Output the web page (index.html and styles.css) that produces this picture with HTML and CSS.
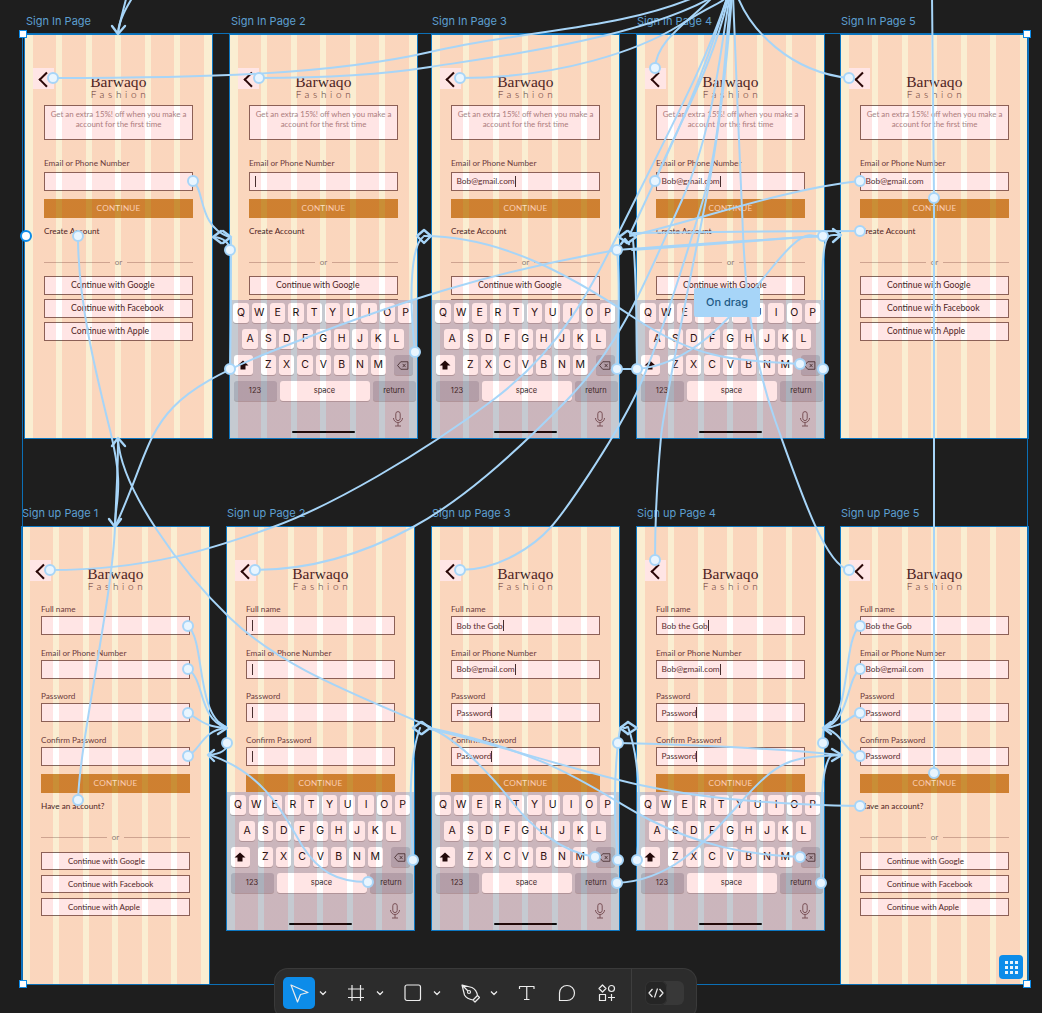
FILE: index.html
```html
<!DOCTYPE html>
<html lang="en">
<head>
<meta charset="utf-8">
<title>Barwaqo Fashion prototype</title>
<link rel="stylesheet" href="styles.css">
</head>
<body>
<svg class="defs" width="0" height="0" aria-hidden="true">
  <symbol id="i-shift" viewBox="0 0 12 10"><path d="M6 .5 11.500 5.500H8.500V9.500H3.500V5.500H.5Z" fill="#0a0a0a"/></symbol>
  <symbol id="i-del" viewBox="0 0 16 12"><path d="M5 1H14.500V11H5L.8 6Z" fill="none" stroke="#222" stroke-width="1"/><path d="M7.500 3.800 11.500 8.200M11.500 3.800 7.500 8.200" stroke="#222" stroke-width="1"/></symbol>
  <symbol id="i-mic" viewBox="0 0 12 16"><rect x="3.800" y=".6" width="4.400" height="9" rx="2.200" fill="none" stroke="#6b5a60" stroke-width="1"/><path d="M1.500 7A4.500 4.500 0 0 0 10.500 7M6 11.500V15M3 15H9" fill="none" stroke="#6b5a60" stroke-width="1"/></symbol>
</svg>
<main class="canvas">

  <section class="board a1">
    <h2 class="cap">Sign In Page</h2>
    <div class="frame">
      <header class="head"><span class="back"></span><div class="logo"><b>Barwaqo</b><i>Fashion</i></div></header>
      <div class="form">
        <p class="promo">Get an extra 15%! off when you make a account for the first time</p>
        <label class="lbl">Email or Phone Number</label>
        <div class="inp"></div>
        <div class="btn">CONTINUE</div>
        <p class="link">Create Account</p>
        <div class="or"><span>or</span></div>
        <div class="soc">Continue with Google</div>
        <div class="soc">Continue with Facebook</div>
        <div class="soc">Continue with Apple</div>
      </div>
    </div>
  </section>

  <section class="board a2">
    <h2 class="cap">Sign In Page 2</h2>
    <div class="frame">
      <header class="head"><span class="back"></span><div class="logo"><b>Barwaqo</b><i>Fashion</i></div></header>
      <div class="form">
        <p class="promo">Get an extra 15%! off when you make a account for the first time</p>
        <label class="lbl">Email or Phone Number</label>
        <div class="inp"><span class="caret"></span></div>
        <div class="btn">CONTINUE</div>
        <p class="link">Create Account</p>
        <div class="or"><span>or</span></div>
        <div class="soc">Continue with Google</div>
        <div class="soc"></div>
      </div>
      <div class="kb">
        <div class="kr"><span class="k">Q</span><span class="k">W</span><span class="k">E</span><span class="k">R</span><span class="k">T</span><span class="k">Y</span><span class="k">U</span><span class="k">I</span><span class="k">O</span><span class="k">P</span></div>
        <div class="kr"><span class="k">A</span><span class="k">S</span><span class="k">D</span><span class="k">F</span><span class="k">G</span><span class="k">H</span><span class="k">J</span><span class="k">K</span><span class="k">L</span></div>
        <div class="kr sb"><span class="k w"><svg class="ks"><use href="#i-shift"/></svg></span><div class="kg"><span class="k">Z</span><span class="k">X</span><span class="k">C</span><span class="k">V</span><span class="k">B</span><span class="k">N</span><span class="k">M</span></div><span class="k w dk"><svg class="kd"><use href="#i-del"/></svg></span></div>
        <div class="kr sb"><span class="k m dk">123</span><span class="k sp">space</span><span class="k m dk">return</span></div>
        <svg class="mic"><use href="#i-mic"/></svg><span class="home"></span>
      </div>
    </div>
  </section>

  <section class="board a3">
    <h2 class="cap">Sign In Page 3</h2>
    <div class="frame">
      <header class="head"><span class="back"></span><div class="logo"><b>Barwaqo</b><i>Fashion</i></div></header>
      <div class="form">
        <p class="promo">Get an extra 15%! off when you make a account for the first time</p>
        <label class="lbl">Email or Phone Number</label>
        <div class="inp">Bob@gmail.com<span class="caret"></span></div>
        <div class="btn">CONTINUE</div>
        <p class="link">Create Account</p>
        <div class="or"><span>or</span></div>
        <div class="soc">Continue with Google</div>
        <div class="soc"></div>
      </div>
      <div class="kb">
        <div class="kr"><span class="k">Q</span><span class="k">W</span><span class="k">E</span><span class="k">R</span><span class="k">T</span><span class="k">Y</span><span class="k">U</span><span class="k">I</span><span class="k">O</span><span class="k">P</span></div>
        <div class="kr"><span class="k">A</span><span class="k">S</span><span class="k">D</span><span class="k">F</span><span class="k">G</span><span class="k">H</span><span class="k">J</span><span class="k">K</span><span class="k">L</span></div>
        <div class="kr sb"><span class="k w"><svg class="ks"><use href="#i-shift"/></svg></span><div class="kg"><span class="k">Z</span><span class="k">X</span><span class="k">C</span><span class="k">V</span><span class="k">B</span><span class="k">N</span><span class="k">M</span></div><span class="k w dk"><svg class="kd"><use href="#i-del"/></svg></span></div>
        <div class="kr sb"><span class="k m dk">123</span><span class="k sp">space</span><span class="k m dk">return</span></div>
        <svg class="mic"><use href="#i-mic"/></svg><span class="home"></span>
      </div>
    </div>
  </section>

  <section class="board a4">
    <h2 class="cap">Sign In Page 4</h2>
    <div class="frame">
      <header class="head"><span class="back"></span><div class="logo"><b>Barwaqo</b><i>Fashion</i></div></header>
      <div class="form">
        <p class="promo">Get an extra 15%! off when you make a account for the first time</p>
        <label class="lbl">Email or Phone Number</label>
        <div class="inp">Bob@gmail.com<span class="caret"></span></div>
        <div class="btn">CONTINUE</div>
        <p class="link">Create Account</p>
        <div class="or"><span>or</span></div>
        <div class="soc">Continue with Google</div>
        <div class="soc"></div>
      </div>
      <div class="kb">
        <div class="kr"><span class="k">Q</span><span class="k">W</span><span class="k">E</span><span class="k">R</span><span class="k">T</span><span class="k">Y</span><span class="k">U</span><span class="k">I</span><span class="k">O</span><span class="k">P</span></div>
        <div class="kr"><span class="k">A</span><span class="k">S</span><span class="k">D</span><span class="k">F</span><span class="k">G</span><span class="k">H</span><span class="k">J</span><span class="k">K</span><span class="k">L</span></div>
        <div class="kr sb"><span class="k w"><svg class="ks"><use href="#i-shift"/></svg></span><div class="kg"><span class="k">Z</span><span class="k">X</span><span class="k">C</span><span class="k">V</span><span class="k">B</span><span class="k">N</span><span class="k">M</span></div><span class="k w dk"><svg class="kd"><use href="#i-del"/></svg></span></div>
        <div class="kr sb"><span class="k m dk">123</span><span class="k sp">space</span><span class="k m dk">return</span></div>
        <svg class="mic"><use href="#i-mic"/></svg><span class="home"></span>
      </div>
    </div>
  </section>

  <section class="board a5">
    <h2 class="cap">Sign In Page 5</h2>
    <div class="frame">
      <header class="head"><span class="back"></span><div class="logo"><b>Barwaqo</b><i>Fashion</i></div></header>
      <div class="form">
        <p class="promo">Get an extra 15%! off when you make a account for the first time</p>
        <label class="lbl">Email or Phone Number</label>
        <div class="inp">Bob@gmail.com</div>
        <div class="btn">CONTINUE</div>
        <p class="link">Create Account</p>
        <div class="or"><span>or</span></div>
        <div class="soc">Continue with Google</div>
        <div class="soc">Continue with Facebook</div>
        <div class="soc">Continue with Apple</div>
      </div>
    </div>
  </section>

  <section class="board b1">
    <h2 class="cap">Sign up Page 1</h2>
    <div class="frame tall up">
      <header class="head"><span class="back"></span><div class="logo"><b>Barwaqo</b><i>Fashion</i></div></header>
      <div class="form">
        <div class="fields">
          <div><label class="lbl">Full name</label><div class="inp"></div></div>
          <div><label class="lbl">Email or Phone Number</label><div class="inp"></div></div>
          <div><label class="lbl">Password</label><div class="inp"></div></div>
          <div><label class="lbl">Confirm Password</label><div class="inp"></div></div>
        </div>
        <div class="btn">CONTINUE</div>
        <p class="link">Have an account?</p>
        <div class="or"><span>or</span></div>
        <div class="soc">Continue with Google</div>
        <div class="soc">Continue with Facebook</div>
        <div class="soc">Continue with Apple</div>
      </div>
    </div>
  </section>

  <section class="board b2">
    <h2 class="cap">Sign up Page 2</h2>
    <div class="frame up">
      <header class="head"><span class="back"></span><div class="logo"><b>Barwaqo</b><i>Fashion</i></div></header>
      <div class="form">
        <div class="fields">
          <div><label class="lbl">Full name</label><div class="inp"><span class="caret"></span></div></div>
          <div><label class="lbl">Email or Phone Number</label><div class="inp"><span class="caret"></span></div></div>
          <div><label class="lbl">Password</label><div class="inp"><span class="caret"></span></div></div>
          <div><label class="lbl">Confirm Password</label><div class="inp"><span class="caret"></span></div></div>
        </div>
        <div class="btn">CONTINUE</div>
      </div>
      <div class="kb">
        <div class="kr"><span class="k">Q</span><span class="k">W</span><span class="k">E</span><span class="k">R</span><span class="k">T</span><span class="k">Y</span><span class="k">U</span><span class="k">I</span><span class="k">O</span><span class="k">P</span></div>
        <div class="kr"><span class="k">A</span><span class="k">S</span><span class="k">D</span><span class="k">F</span><span class="k">G</span><span class="k">H</span><span class="k">J</span><span class="k">K</span><span class="k">L</span></div>
        <div class="kr sb"><span class="k w"><svg class="ks"><use href="#i-shift"/></svg></span><div class="kg"><span class="k">Z</span><span class="k">X</span><span class="k">C</span><span class="k">V</span><span class="k">B</span><span class="k">N</span><span class="k">M</span></div><span class="k w dk"><svg class="kd"><use href="#i-del"/></svg></span></div>
        <div class="kr sb"><span class="k m dk">123</span><span class="k sp">space</span><span class="k m dk">return</span></div>
        <svg class="mic"><use href="#i-mic"/></svg><span class="home"></span>
      </div>
    </div>
  </section>

  <section class="board b3">
    <h2 class="cap">Sign up Page 3</h2>
    <div class="frame up">
      <header class="head"><span class="back"></span><div class="logo"><b>Barwaqo</b><i>Fashion</i></div></header>
      <div class="form">
        <div class="fields">
          <div><label class="lbl">Full name</label><div class="inp">Bob the Gob<span class="caret"></span></div></div>
          <div><label class="lbl">Email or Phone Number</label><div class="inp">Bob@gmail.com<span class="caret"></span></div></div>
          <div><label class="lbl">Password</label><div class="inp">Password<span class="caret"></span></div></div>
          <div><label class="lbl">Confirm Password</label><div class="inp">Password<span class="caret"></span></div></div>
        </div>
        <div class="btn">CONTINUE</div>
      </div>
      <div class="kb">
        <div class="kr"><span class="k">Q</span><span class="k">W</span><span class="k">E</span><span class="k">R</span><span class="k">T</span><span class="k">Y</span><span class="k">U</span><span class="k">I</span><span class="k">O</span><span class="k">P</span></div>
        <div class="kr"><span class="k">A</span><span class="k">S</span><span class="k">D</span><span class="k">F</span><span class="k">G</span><span class="k">H</span><span class="k">J</span><span class="k">K</span><span class="k">L</span></div>
        <div class="kr sb"><span class="k w"><svg class="ks"><use href="#i-shift"/></svg></span><div class="kg"><span class="k">Z</span><span class="k">X</span><span class="k">C</span><span class="k">V</span><span class="k">B</span><span class="k">N</span><span class="k">M</span></div><span class="k w dk"><svg class="kd"><use href="#i-del"/></svg></span></div>
        <div class="kr sb"><span class="k m dk">123</span><span class="k sp">space</span><span class="k m dk">return</span></div>
        <svg class="mic"><use href="#i-mic"/></svg><span class="home"></span>
      </div>
    </div>
  </section>

  <section class="board b4">
    <h2 class="cap">Sign up Page 4</h2>
    <div class="frame up">
      <header class="head"><span class="back"></span><div class="logo"><b>Barwaqo</b><i>Fashion</i></div></header>
      <div class="form">
        <div class="fields">
          <div><label class="lbl">Full name</label><div class="inp">Bob the Gob<span class="caret"></span></div></div>
          <div><label class="lbl">Email or Phone Number</label><div class="inp">Bob@gmail.com<span class="caret"></span></div></div>
          <div><label class="lbl">Password</label><div class="inp">Password<span class="caret"></span></div></div>
          <div><label class="lbl">Confirm Password</label><div class="inp">Password<span class="caret"></span></div></div>
        </div>
        <div class="btn">CONTINUE</div>
      </div>
      <div class="kb">
        <div class="kr"><span class="k">Q</span><span class="k">W</span><span class="k">E</span><span class="k">R</span><span class="k">T</span><span class="k">Y</span><span class="k">U</span><span class="k">I</span><span class="k">O</span><span class="k">P</span></div>
        <div class="kr"><span class="k">A</span><span class="k">S</span><span class="k">D</span><span class="k">F</span><span class="k">G</span><span class="k">H</span><span class="k">J</span><span class="k">K</span><span class="k">L</span></div>
        <div class="kr sb"><span class="k w"><svg class="ks"><use href="#i-shift"/></svg></span><div class="kg"><span class="k">Z</span><span class="k">X</span><span class="k">C</span><span class="k">V</span><span class="k">B</span><span class="k">N</span><span class="k">M</span></div><span class="k w dk"><svg class="kd"><use href="#i-del"/></svg></span></div>
        <div class="kr sb"><span class="k m dk">123</span><span class="k sp">space</span><span class="k m dk">return</span></div>
        <svg class="mic"><use href="#i-mic"/></svg><span class="home"></span>
      </div>
    </div>
  </section>

  <section class="board b5">
    <h2 class="cap">Sign up Page 5</h2>
    <div class="frame tall up">
      <header class="head"><span class="back"></span><div class="logo"><b>Barwaqo</b><i>Fashion</i></div></header>
      <div class="form">
        <div class="fields">
          <div><label class="lbl">Full name</label><div class="inp">Bob the Gob</div></div>
          <div><label class="lbl">Email or Phone Number</label><div class="inp">Bob@gmail.com</div></div>
          <div><label class="lbl">Password</label><div class="inp">Password</div></div>
          <div><label class="lbl">Confirm Password</label><div class="inp">Password</div></div>
        </div>
        <div class="btn">CONTINUE</div>
        <p class="link">Have an account?</p>
        <div class="or"><span>or</span></div>
        <div class="soc">Continue with Google</div>
        <div class="soc">Continue with Facebook</div>
        <div class="soc">Continue with Apple</div>
      </div>
    </div>
  </section>

  <div class="selection">
    <span class="handle tl"></span><span class="handle tr"></span><span class="handle bl"></span><span class="handle br"></span>
  </div>

  <svg class="wires" width="1042" height="1013" viewBox="0 0 1042 1013" aria-hidden="true">
    <!-- back links up to the top bundle -->
    <path d="M54 78C200 78 330 75 430 52S620 30 700 -5"/>
    <path d="M259 78C330 78 380 75 430 67S640 40 716 -5"/>
    <path d="M460 78C560 78 640 50 680 25S720 5 728 -5"/>
    <path d="M655 68C657 40 685 25 715 -5"/>
    <path d="M849 78C790 72 750 30 737 -5"/>
    <path d="M50 570C150 570 215 548 273 527S420 455 493 400S590 290 640 190S710 50 728 -5"/>
    <path d="M255 570C310 570 365 553 413 527S510 458 567 400S650 270 682 200S720 50 730 -5"/>
    <path d="M460 570C500 570 535 545 551 527S610 445 633 400S685 260 703 200S725 50 731 -5"/>
    <path d="M655 560C655 520 658 470 661 437S690 280 706 200S728 50 732 -5"/>
    <path d="M849 570C825 565 800 490 775 420S745 280 743 233S735 50 733 -5"/>
    <path d="M655 181C680 120 712 70 729 -5"/>
    <path d="M630 234C660 170 700 90 728 -5"/>
    <path d="M932 -5 934 198V773"/>
    <!-- first column -->
    <path d="M118 33C120 20 124 8 127 -5"/>
    <path d="M118 33C119 20 126 8 134 -5"/>
    <path d="M78 236C78 300 95 370 110 430S115 500 115 527"/>
    <path d="M78 800C80 740 112 600 115 527S118 470 118 439"/>
    <path d="M118 440C122 490 180 570 230 618S350 692 430 727"/>
    <path d="M617 250C500 270 400 300 270 352S160 430 115 527"/>
    <!-- top row -->
    <path d="M193 181C205 190 198 226 229 237"/>
    <path d="M230 250C229 243 224 238 214 237"/>
    <path d="M230 369C231 320 231 270 231 238"/>
    <path d="M415 352C408 290 412 245 423 237"/>
    <path d="M424 236C500 236 570 275 633 317S730 360 800 364"/>
    <path d="M617 250C680 245 760 240 823 236"/>
    <path d="M632 250C700 245 770 240 820 236"/>
    <path d="M633 233C700 232 800 231 860 231"/>
    <path d="M859 181C780 190 700 220 630 236"/>
    <path d="M823 369C822 310 821 270 824 250S832 236 840 235"/>
    <path d="M617 369C619 320 620 280 617 250"/>
    <path d="M637 369C636 320 637 280 633 240"/>
    <path d="M617 369H637C690 365 730 320 770 270S810 240 823 236"/>
    <!-- bottom row -->
    <path d="M188 626C205 640 196 715 226 727"/>
    <path d="M188 669C205 680 198 718 226 728"/>
    <path d="M188 713C200 720 205 727 226 728"/>
    <path d="M188 756C200 750 203 730 226 728"/>
    <path d="M227 743C228 750 220 754 209 755"/>
    <path d="M368 882C335 882 318 870 303 847S270 775 210 755"/>
    <path d="M413 860C410 810 408 760 420 728"/>
    <path d="M595 857C560 852 530 825 513 803S460 740 430 728"/>
    <path d="M860 806C780 805 700 798 640 785S500 745 430 729"/>
    <path d="M800 857C745 855 700 845 650 820S560 755 430 728"/>
    <path d="M617 883C670 880 700 848 740 803S790 758 840 755"/>
    <path d="M618 743C700 745 770 748 840 755"/>
    <path d="M618 860C613 810 615 770 618 743S622 732 627 727"/>
    <path d="M637 860C641 810 640 760 628 727"/>
    <path d="M823 743C822 738 823 732 824 728"/>
    <path d="M821 883C822 830 820 790 825 770S832 757 840 755"/>
    <path d="M860 626C842 640 852 718 824 728"/>
    <path d="M860 669C846 680 850 720 824 728"/>
    <path d="M860 713C850 716 842 727 824 728"/>
    <path d="M860 756C845 752 842 732 824 728"/>
    <!-- arrowheads -->
    <path class="arrow" d="M112 26 118 34 125 26"/>
    <path class="arrow" d="M112 446 118 438 125 446"/>
    <path class="arrow" d="M109 519 115 527 121 519"/>
    <path class="arrow" d="M223 231 231 237 223 243"/>
    <path class="arrow" d="M221 231 213 237 221 243"/>
    <path class="arrow" d="M424 230 417 236 424 243 431 236Z"/>
    <path class="arrow" d="M627 231 619 237 627 243"/>
    <path class="arrow" d="M628 231 636 237 628 243"/>
    <path class="arrow" d="M621 244 625 239 629 244"/>
    <path class="arrow" d="M833 229 841 235 833 242"/>
    <path class="arrow" d="M218 722 227 728 218 734"/>
    <path class="arrow" d="M214 750 208 755 214 761"/>
    <path class="arrow" d="M422 722 430 728 422 734"/>
    <path class="arrow" d="M421 722 413 728 421 734"/>
    <path class="arrow" d="M628 722 620 728 628 734"/>
    <path class="arrow" d="M628 722 637 728 628 734"/>
    <path class="arrow" d="M831 722 823 728 831 734"/>
    <path class="arrow" d="M832 749 842 755 832 761"/>
    <!-- nodes -->
    <circle cx="53" cy="78" r="5"/><circle cx="259" cy="78" r="5"/><circle cx="460" cy="78" r="5"/><circle cx="655" cy="68" r="5"/><circle cx="849" cy="78" r="5"/>
    <circle cx="193" cy="181" r="5"/><circle cx="655" cy="181" r="5"/><circle cx="860" cy="181" r="5"/>
    <circle cx="78" cy="236" r="5"/><circle cx="230" cy="250" r="5"/><circle cx="617" cy="250" r="5"/><circle cx="823" cy="236" r="5"/><circle cx="860" cy="231" r="5"/><circle cx="934" cy="198" r="5"/>
    <circle cx="415" cy="352" r="5"/><circle cx="230" cy="369" r="5"/><circle cx="617" cy="369" r="5"/><circle cx="637" cy="369" r="5"/><circle cx="800" cy="364" r="5"/><circle cx="823" cy="369" r="5"/>
    <circle cx="50" cy="570" r="5"/><circle cx="255" cy="570" r="5"/><circle cx="460" cy="570" r="5"/><circle cx="655" cy="560" r="5"/><circle cx="849" cy="570" r="5"/>
    <circle cx="188" cy="626" r="5"/><circle cx="188" cy="669" r="5"/><circle cx="188" cy="713" r="5"/><circle cx="188" cy="756" r="5"/><circle cx="78" cy="800" r="5"/>
    <circle cx="860" cy="626" r="5"/><circle cx="860" cy="669" r="5"/><circle cx="860" cy="713" r="5"/><circle cx="860" cy="756" r="5"/><circle cx="860" cy="806" r="5"/><circle cx="934" cy="773" r="5"/>
    <circle cx="227" cy="743" r="5"/><circle cx="618" cy="743" r="5"/><circle cx="823" cy="743" r="5"/>
    <circle cx="413" cy="860" r="5"/><circle cx="595" cy="857" r="5"/><circle cx="618" cy="860" r="5"/><circle cx="637" cy="860" r="5"/><circle cx="800" cy="857" r="5"/>
    <circle cx="368" cy="882" r="5"/><circle cx="617" cy="883" r="5"/><circle cx="821" cy="883" r="5"/>
    <circle class="start" cx="26" cy="236" r="5"/>
  </svg>

  <div class="drag">On drag</div>

  <div class="grid-btn"><span></span><span></span><span></span><span></span><span></span><span></span><span></span><span></span><span></span></div>

  <nav class="toolbar">
    <span class="tool on"><svg width="20" height="20" viewBox="0 0 20 20"><path d="M2 2 19 9.500 11.500 11.500 8.500 19Z"/></svg></span>
    <span class="chev"><svg width="8" height="6" viewBox="0 0 8 6"><path d="M1 1.500 4 4.500 7 1.500"/></svg></span>
    <span class="tool"><svg width="18" height="18" viewBox="0 0 18 18"><path d="M1 5H17M1 13.500H17M5 1V17M13.500 1V17"/></svg></span>
    <span class="chev"><svg width="8" height="6" viewBox="0 0 8 6"><path d="M1 1.500 4 4.500 7 1.500"/></svg></span>
    <span class="tool"><svg width="18" height="18" viewBox="0 0 18 18"><rect x="1" y="1" width="15.500" height="15.500" rx="2"/></svg></span>
    <span class="chev"><svg width="8" height="6" viewBox="0 0 8 6"><path d="M1 1.500 4 4.500 7 1.500"/></svg></span>
    <span class="tool"><svg width="20" height="20" viewBox="0 0 20 20"><path d="M2 2 12 4.500C15 6 17 9.500 17.500 12.500L13 17C10 16.500 6 14.500 4.500 12ZM2 2 8 8M13 17 15 19 19.500 14.500 17.500 12.500"/><circle cx="9" cy="9" r="1.500"/></svg></span>
    <span class="chev"><svg width="8" height="6" viewBox="0 0 8 6"><path d="M1 1.500 4 4.500 7 1.500"/></svg></span>
    <span class="tool"><svg width="18" height="18" viewBox="0 0 18 18"><path d="M1.500 5V2.500H16V5M8.750 2.500V15.500M6 15.500H11.500"/></svg></span>
    <span class="tool tight"><svg width="18" height="18" viewBox="0 0 18 18"><path d="M1.500 16.500V9A7.500 7.500 0 1 1 9 16.500Z"/></svg></span>
    <span class="tool tight"><svg width="18" height="18" viewBox="0 0 18 18"><path d="M4.500 1 8 4.500 4.500 8 1 4.500ZM1.500 10.500H7.500V16.500H1.500ZM13.500 10V17M10 13.500H17"/><circle cx="13.500" cy="4.500" r="3"/></svg></span>
    <span class="divider"></span>
    <div class="code"><span class="code-on"><svg width="16" height="10" viewBox="0 0 16 10"><path d="M4.500 1 1 5 4.500 9M11.500 1 15 5 11.500 9M9.500 .5 6.500 9.500"/></svg></span></div>
  </nav>
</main>
</body>
</html>
```
FILE: styles.css
```css
* { box-sizing: border-box; margin: 0; padding: 0; }
html, body { width: 1042px; height: 1013px; overflow: hidden; background: #1e1e1e; }
body { font-family: "Lato", "Noto Sans", sans-serif; }
.defs { position: absolute; }
.canvas { position: relative; width: 1042px; height: 1013px; overflow: hidden; }

/* artboards sit on a free canvas */
.board { position: absolute; top: 14px; width: 186.6px; display: flex; flex-direction: column; }
.a1 { left: 25px; } .a2 { left: 230px; } .a3 { left: 432px; } .a4 { left: 637px; } .a5 { left: 841px; }
.b1, .b2, .b3, .b4, .b5 { top: 506px; }
.b1 { left: 22px; } .b2 { left: 227px; } .b3 { left: 432px; } .b4 { left: 637px; } .b5 { left: 841px; }

.cap { height: 15px; margin: 0 0 6px 1px; font: 400 11px/15px "Inter", sans-serif; color: #5d9fd0; white-space: nowrap; }
.a3 .cap, .a4 .cap, .a5 .cap, .b1 .cap, .b2 .cap, .b3 .cap, .b4 .cap, .b5 .cap { margin-left: 0; }

.frame { position: relative; height: 403px; overflow: hidden; background: #faeed2; color: #3d2526; outline: 1.5px solid #0c77c2; }
.frame.tall { height: 457px; }
.frame::after { content: ""; position: absolute; inset: 0 8px; pointer-events: none;
  background: repeating-linear-gradient(90deg, rgba(255, 0, 0, .1) 0 23.43px, transparent 23.43px 29.43px); }

.head { display: flex; height: 69.5px; padding: 33px 8px 0; }
.up .head { height: 77px; }
.back { position: relative; flex: none; width: 21px; height: 21px; background: #fff; }
.back::before { content: ""; position: absolute; left: 8px; top: 6px; width: 8.5px; height: 8.5px; border-left: 2px solid #120808; border-bottom: 2px solid #120808; transform: rotate(45deg); }
.logo { flex: 1; margin: 5px 21px 0 0; display: flex; flex-direction: column; align-items: center; color: #3a2828; }
.logo b { font: 400 15.5px/17px "Liberation Serif", serif; letter-spacing: .05px; }
.logo i { font: 300 10px/9px "Lato", sans-serif; letter-spacing: 3.7px; margin-right: -3.7px; color: #4a3434; }

.form { display: flex; flex-direction: column; padding: 0 18.5px 0 19px; }
.promo { height: 35px; margin-bottom: 18.500px; padding: 3.500px 3px 0; background: #fff; border: 1px solid #7f6b60; font-size: 7.900px; line-height: 10px; text-align: center; color: #a48b8c; }
.lbl { display: block; height: 10px; margin-bottom: 4px; font-size: 8.200px; line-height: 10px; white-space: nowrap; color: #5a4445; }
.inp { display: flex; align-items: center; height: 18.500px; padding-left: 4.500px; margin-bottom: 8.500px; background: #fff; border: 1px solid #7f6b60; border-bottom-width: 1.500px; font-size: 8.300px; color: #4a3233; white-space: nowrap; }
.caret { width: 1px; height: 11px; background: #333; }
.btn { height: 18.500px; background: #c98e36; color: #fbe3c6; font-size: 8.200px; line-height: 18.500px; text-align: center; letter-spacing: .2px; }
.link { height: 10px; margin-top: 8.500px; font-size: 8.200px; line-height: 10px; color: #3a2828; }
.or { display: flex; align-items: center; gap: 5px; height: 12px; margin: 20px 0 8px; font-size: 8px; color: #8e7a76; }
.or::before, .or::after { content: ""; flex: 1; height: 1px; background: #c9b6a0; }
.soc { height: 18.500px; margin-bottom: 4.500px; padding-left: 26px; background: #fff; border: 1px solid #7f6b60; font-size: 8.700px; line-height: 16.500px; color: #3a2828; white-space: nowrap; }

/* sign-up form metrics */
.up .lbl { margin-bottom: 2px; }
.fields { display: flex; flex-direction: column; gap: 12.670px; }
.fields .inp { height: 19px; margin-bottom: 0; }
.up .btn { height: 19px; margin-top: 8px; line-height: 19px; }
.up .or { margin: 20px 0 9px; }
.up .soc { height: 18px; margin-bottom: 5px; font-size: 8px; line-height: 16px; }

/* keyboard sits over the bottom of the frame */
.kb { position: absolute; left: 0; right: 0; bottom: 0; height: 138px; padding: 3px 3.500px 0; display: flex; flex-direction: column; gap: 6px; background: #c5cad1; }
.kr { display: flex; justify-content: center; gap: 3px; }
.kr.sb { justify-content: space-between; }
.kg { display: flex; gap: 3px; }
.k { display: flex; align-items: center; justify-content: center; flex: none; width: 15.300px; height: 20px; border-radius: 3px; background: #fff; box-shadow: 0 1px 0 #a8a5aa; font: 400 10.500px/1 "Inter", "Roboto", sans-serif; color: #111; }
.k.w { width: 19.500px; }
.k.m { width: 43px; font-size: 7.500px; color: #2a2a2a; }
.k.sp { width: 90px; font-size: 7.500px; color: #2a2a2a; }
.k.dk { background: #abb0bb; }
.ks { width: 12px; height: 10px; }
.kd { width: 12px; height: 9px; }
.mic { position: absolute; left: 162px; bottom: 11px; width: 12px; height: 16px; }
.home { position: absolute; left: 62px; bottom: 5px; width: 63px; height: 2px; border-radius: 1px; background: #0a0a0a; }

/* selection box over the canvas */
.selection { position: absolute; left: 22px; top: 33px; width: 1006px; height: 952px; border: 1px solid #0c6fb5; }
.handle { position: absolute; width: 8px; height: 8px; background: #fff; border: 1.500px solid #0d8ce9; }
.tl { left: -4px; top: -4px; } .tr { right: -4px; top: -4px; }
.bl { left: -4px; bottom: -4px; } .br { right: -4px; bottom: -4px; }

/* prototype connectors */
.wires { position: absolute; left: 0; top: 0; }
.wires path { fill: none; stroke: #a7d5f8; stroke-width: 2; stroke-linecap: round; stroke-linejoin: round; }
.wires .arrow { stroke-width: 2.400; }
.wires circle { fill: #e9f5fe; stroke: #a7d5f8; stroke-width: 2; }
.wires .start { fill: #fff; stroke: #0d8ce9; }

.drag { position: absolute; left: 694px; top: 288px; width: 66px; height: 29px; border-radius: 2px; background: #a7d5f8; font: 500 11px/29px "Inter", sans-serif; text-align: center; color: #1e5a85; }

.grid-btn { position: absolute; left: 999px; top: 955px; width: 24px; height: 24px; padding: 6px; display: grid; grid-template-columns: repeat(3, 3px); grid-auto-rows: 3px; gap: 2px; border-radius: 4px; background: #0d8ce9; }
.grid-btn span { background: #e8f4fd; }

/* bottom toolbar */
.toolbar { position: absolute; left: 275px; top: 969px; width: 421px; height: 50px; padding: 8px 0 0 8px; display: flex; align-items: flex-start; border-radius: 13px; background: #2c2c2c; box-shadow: 0 0 0 1px #3a3a3a; }
.toolbar svg { display: block; }
.toolbar path, .toolbar rect, .toolbar circle { fill: none; stroke: #ececec; stroke-width: 1.200; stroke-linejoin: round; }
.tool { flex: none; display: flex; align-items: center; justify-content: center; width: 32px; height: 32px; margin-left: 11px; border-radius: 5px; }
.tool:first-child { margin-left: 0; }
.tool.tight { margin-left: 8px; }
.tool.on { background: #0d8ce9; }
.chev { flex: none; display: flex; align-items: center; justify-content: center; width: 12px; height: 32px; margin-left: 2px; }
.divider { flex: none; width: 1px; height: 60px; margin: -8px 0 0 8px; background: #3e3e3e; }
.code { flex: none; width: 39px; height: 24px; margin: 4px 0 0 13px; border-radius: 6px; background: #383838; }
.code-on { display: flex; align-items: center; justify-content: center; width: 22px; height: 24px; border-radius: 6px; background: #252525; box-shadow: inset 0 0 0 1px #333; }
```
